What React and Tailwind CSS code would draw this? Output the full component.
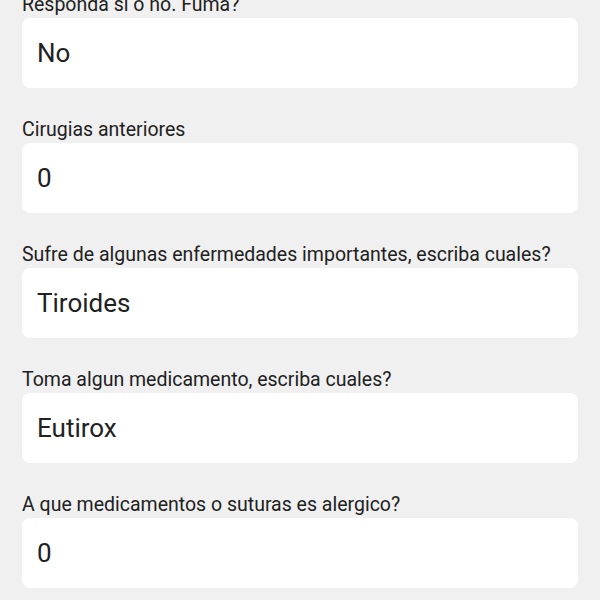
const fields = [
  { label: "Responda si o no. Fuma?", value: "No" },
  { label: "Cirugias anteriores", value: "0" },
  { label: "Sufre de algunas enfermedades importantes, escriba cuales?", value: "Tiroides" },
  { label: "Toma algun medicamento, escriba cuales?", value: "Eutirox" },
  { label: "A que medicamentos o suturas es alergico?", value: "0" },
];

export default function App() {
  return (
    <div className="w-[600px] h-[600px] overflow-hidden bg-[#f0f0f0] px-[22px] font-['Roboto',sans-serif] text-[#212121]">
      <div className="-mt-[7px] flex flex-col gap-[30px]">
        {fields.map((f, i) => (
          <div key={i} className="flex flex-col gap-px">
            <p className="text-[19.5px] leading-[24px] whitespace-nowrap">{f.label}</p>
            <div className="h-[70px] bg-white rounded-[8px] flex items-center px-[15px]">
              <span className="text-[26px] leading-none">{f.value}</span>
            </div>
          </div>
        ))}
      </div>
    </div>
  );
}
